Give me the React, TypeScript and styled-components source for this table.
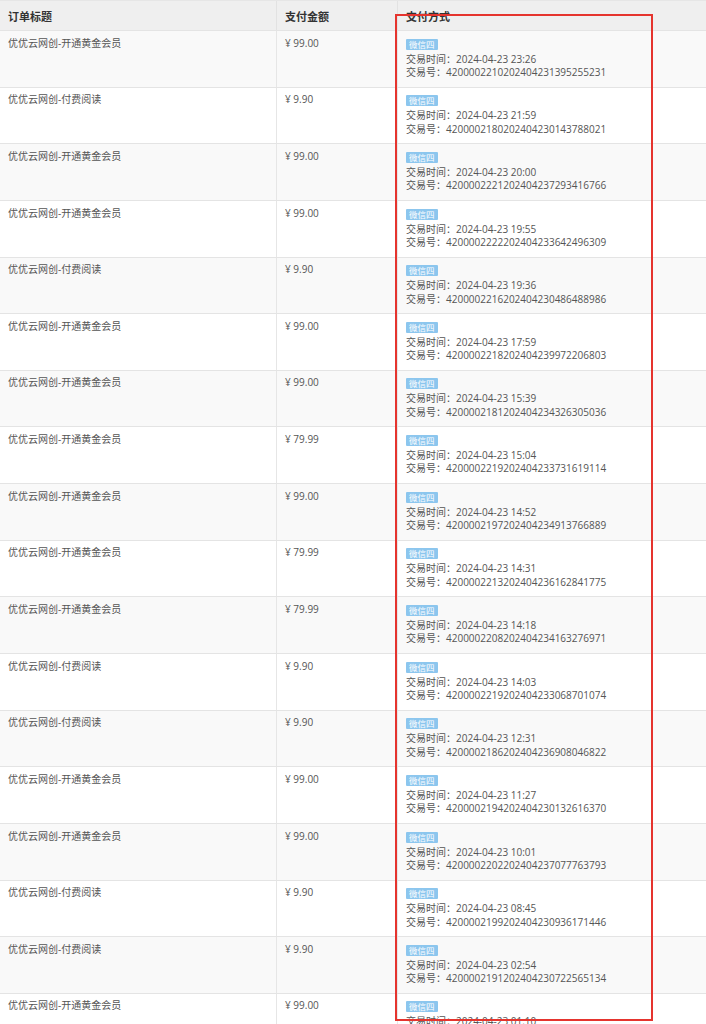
import React from "react";
import styled, { createGlobalStyle } from "styled-components";

const Global = createGlobalStyle`
  html, body { margin: 0; padding: 0; background: #fff; }
  body { font-family: "Open Sans", "Noto Sans CJK SC", sans-serif; overflow: hidden; }
`;

const Wrap = styled.div`
  position: relative;
  width: 706px;
`;

const Table = styled.div`
  display: flex;
  flex-direction: column;
`;

const HeadRow = styled.div`
  display: grid;
  grid-template-columns: 276px 121px 1fr;
  height: 30px;
  box-sizing: border-box;
  background: #efefef;
  border-top: 1px solid #e6e6e6;
`;

const HeadCell = styled.div<{ $first?: boolean }>`
  display: flex;
  align-items: center;
  padding: 0 8px 0 ${(p) => (p.$first ? 8 : 8)}px;
  border-left: ${(p) => (p.$first ? "none" : "1px solid #e2e2e2")};
  font-size: 11px;
  font-weight: 700;
  color: #333;
`;

const Row = styled.div<{ $odd: boolean }>`
  display: grid;
  grid-template-columns: 276px 121px 1fr;
  height: 56.65px;
  box-sizing: border-box;
  border-top: 1px solid #e4e4e4;
  background: ${(p) => (p.$odd ? "#f9f9f9" : "#ffffff")};
`;

const Cell = styled.div<{ $first?: boolean }>`
  padding: 5.6px 8px 0 8px;
  border-left: ${(p) => (p.$first ? "none" : "1px solid #e6e6e6")};
  font-size: 10px;
  line-height: 13.4px;
  color: #555;
  white-space: nowrap;
  overflow: hidden;
`;

const Badge = styled.span`
  display: inline-block;
  margin-top: 2px;
  margin-bottom: 3px;
  height: 11px;
  line-height: 11px;
  padding: 0 3px;
  font-size: 8.5px;
  color: #fff;
  background: #8cc6ee;
  border-radius: 1px;
  vertical-align: top;
`;

const Line = styled.div`
  line-height: 13.4px;
`;

const RedBox = styled.div`
  position: absolute;
  left: 395px;
  top: 14px;
  width: 258px;
  height: 1007px;
  box-sizing: border-box;
  border: 2px solid #e5342e;
  pointer-events: none;
`;

type Order = { title: string; amount: string; time: string; no: string };

const GOLD = "优优云网创-开通黄金会员";
const READ = "优优云网创-付费阅读";

const orders: Order[] = [
  { title: GOLD, amount: "99.00", time: "23:26", no: "4200002210202404231395255231" },
  { title: READ, amount: "9.90", time: "21:59", no: "4200002180202404230143788021" },
  { title: GOLD, amount: "99.00", time: "20:00", no: "4200002221202404237293416766" },
  { title: GOLD, amount: "99.00", time: "19:55", no: "4200002222202404233642496309" },
  { title: READ, amount: "9.90", time: "19:36", no: "4200002216202404230486488986" },
  { title: GOLD, amount: "99.00", time: "17:59", no: "4200002218202404239972206803" },
  { title: GOLD, amount: "99.00", time: "15:39", no: "4200002181202404234326305036" },
  { title: GOLD, amount: "79.99", time: "15:04", no: "4200002219202404233731619114" },
  { title: GOLD, amount: "99.00", time: "14:52", no: "4200002197202404234913766889" },
  { title: GOLD, amount: "79.99", time: "14:31", no: "4200002213202404236162841775" },
  { title: GOLD, amount: "79.99", time: "14:18", no: "4200002208202404234163276971" },
  { title: READ, amount: "9.90", time: "14:03", no: "4200002219202404233068701074" },
  { title: READ, amount: "9.90", time: "12:31", no: "4200002186202404236908046822" },
  { title: GOLD, amount: "99.00", time: "11:27", no: "4200002194202404230132616370" },
  { title: GOLD, amount: "99.00", time: "10:01", no: "4200002202202404237077763793" },
  { title: READ, amount: "9.90", time: "08:45", no: "4200002199202404230936171446" },
  { title: READ, amount: "9.90", time: "02:54", no: "4200002191202404230722565134" },
  { title: GOLD, amount: "99.00", time: "01:10", no: "4200002205202404231185602347" },
];

export default function App() {
  return (
    <Wrap>
      <Global />
      <Table>
        <HeadRow>
          <HeadCell $first>订单标题</HeadCell>
          <HeadCell>支付金额</HeadCell>
          <HeadCell>支付方式</HeadCell>
        </HeadRow>
        {orders.map((o, i) => (
          <Row key={i} $odd={i % 2 === 0}>
            <Cell $first>{o.title}</Cell>
            <Cell>¥ {o.amount}</Cell>
            <Cell>
              <Badge>微信四</Badge>
              <Line>交易时间：2024-04-23 {o.time}</Line>
              <Line>交易号：{o.no}</Line>
            </Cell>
          </Row>
        ))}
      </Table>
      <RedBox />
    </Wrap>
  );
}
